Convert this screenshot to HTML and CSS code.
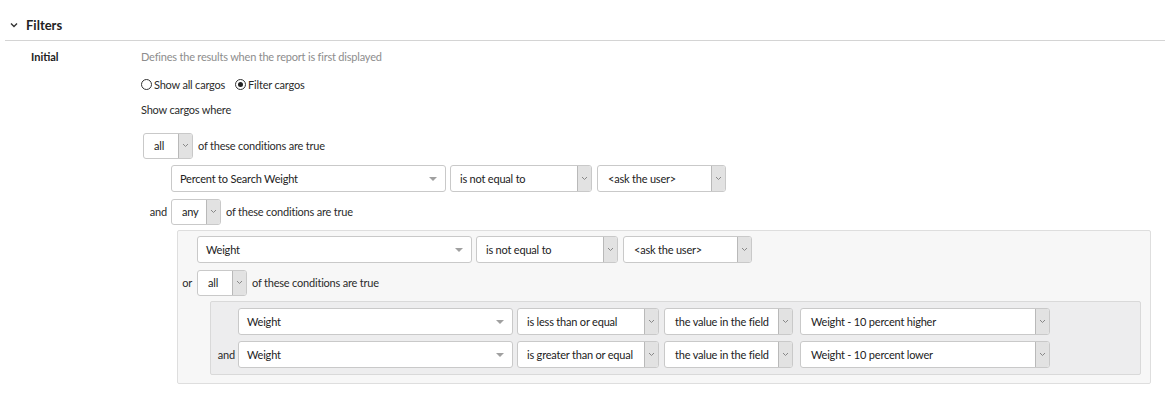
FILE: index.html
```html
<!DOCTYPE html>
<html>
<head>
<meta charset="utf-8">
<link rel="stylesheet" href="styles.css">
</head>
<body>
<div class="header">
  <svg class="hdr-chev" width="8" height="6" viewBox="0 0 8 6"><polyline points="1,1.5 4,4.5 7,1.5" fill="none" stroke="#333" stroke-width="1.4"/></svg>
  <span class="hdr-title">Filters</span>
</div>
<div class="section">
  <div class="label">Initial</div>
  <div class="content">
    <div class="desc">Defines the results when the report is first displayed</div>
    <div class="radios">
      <span class="radio"></span><span class="radio-text">Show all cargos</span>
      <span class="radio checked"></span><span class="radio-text">Filter cargos</span>
    </div>
    <div class="where">Show cargos where</div>

    <div class="group g1">
      <div class="ghead">
        <div class="sel sm"><span class="sel-text">all</span><span class="arr"><svg width="7" height="5" viewBox="0 0 7 5"><polyline points="1,1 3.5,3.5 6,1" fill="none" stroke="#888" stroke-width="1"/></svg></span></div>
        <span class="gtext">of these conditions are true</span>
      </div>
      <div class="row r1">
        <span class="conn"></span>
        <div class="combo"><span class="sel-text">Percent to Search Weight</span><span class="tri"></span></div>
        <div class="sel op"><span class="sel-text">is not equal to</span><span class="arr"><svg width="7" height="5" viewBox="0 0 7 5"><polyline points="1,1 3.5,3.5 6,1" fill="none" stroke="#888" stroke-width="1"/></svg></span></div>
        <div class="sel val"><span class="sel-text">&lt;ask the user&gt;</span><span class="arr"><svg width="7" height="5" viewBox="0 0 7 5"><polyline points="1,1 3.5,3.5 6,1" fill="none" stroke="#888" stroke-width="1"/></svg></span></div>
      </div>
      <div class="row r1 grow">
        <span class="conn">and</span>
        <div class="group g2">
          <div class="ghead">
            <div class="sel sm"><span class="sel-text">any</span><span class="arr"><svg width="7" height="5" viewBox="0 0 7 5"><polyline points="1,1 3.5,3.5 6,1" fill="none" stroke="#888" stroke-width="1"/></svg></span></div>
            <span class="gtext">of these conditions are true</span>
          </div>
          <div class="box b2">
            <div class="row r2">
              <span class="conn"></span>
              <div class="combo"><span class="sel-text">Weight</span><span class="tri"></span></div>
              <div class="sel op"><span class="sel-text">is not equal to</span><span class="arr"><svg width="7" height="5" viewBox="0 0 7 5"><polyline points="1,1 3.5,3.5 6,1" fill="none" stroke="#888" stroke-width="1"/></svg></span></div>
              <div class="sel val"><span class="sel-text">&lt;ask the user&gt;</span><span class="arr"><svg width="7" height="5" viewBox="0 0 7 5"><polyline points="1,1 3.5,3.5 6,1" fill="none" stroke="#888" stroke-width="1"/></svg></span></div>
            </div>
            <div class="row r2 grow">
              <span class="conn">or</span>
              <div class="group g3">
                <div class="ghead">
                  <div class="sel sm"><span class="sel-text">all</span><span class="arr"><svg width="7" height="5" viewBox="0 0 7 5"><polyline points="1,1 3.5,3.5 6,1" fill="none" stroke="#888" stroke-width="1"/></svg></span></div>
                  <span class="gtext">of these conditions are true</span>
                </div>
                <div class="box b3">
                  <div class="row r3">
                    <span class="conn"></span>
                    <div class="combo"><span class="sel-text">Weight</span><span class="tri"></span></div>
                    <div class="sel op"><span class="sel-text">is less than or equal</span><span class="arr"><svg width="7" height="5" viewBox="0 0 7 5"><polyline points="1,1 3.5,3.5 6,1" fill="none" stroke="#888" stroke-width="1"/></svg></span></div>
                    <div class="sel val"><span class="sel-text">the value in the field</span><span class="arr"><svg width="7" height="5" viewBox="0 0 7 5"><polyline points="1,1 3.5,3.5 6,1" fill="none" stroke="#888" stroke-width="1"/></svg></span></div>
                    <div class="sel fld"><span class="sel-text">Weight - 10 percent higher</span><span class="arr"><svg width="7" height="5" viewBox="0 0 7 5"><polyline points="1,1 3.5,3.5 6,1" fill="none" stroke="#888" stroke-width="1"/></svg></span></div>
                  </div>
                  <div class="row r3">
                    <span class="conn">and</span>
                    <div class="combo"><span class="sel-text">Weight</span><span class="tri"></span></div>
                    <div class="sel op"><span class="sel-text">is greater than or equal</span><span class="arr"><svg width="7" height="5" viewBox="0 0 7 5"><polyline points="1,1 3.5,3.5 6,1" fill="none" stroke="#888" stroke-width="1"/></svg></span></div>
                    <div class="sel val"><span class="sel-text">the value in the field</span><span class="arr"><svg width="7" height="5" viewBox="0 0 7 5"><polyline points="1,1 3.5,3.5 6,1" fill="none" stroke="#888" stroke-width="1"/></svg></span></div>
                    <div class="sel fld"><span class="sel-text">Weight - 10 percent lower</span><span class="arr"><svg width="7" height="5" viewBox="0 0 7 5"><polyline points="1,1 3.5,3.5 6,1" fill="none" stroke="#888" stroke-width="1"/></svg></span></div>
                  </div>
                </div>
              </div>
            </div>
          </div>
        </div>
      </div>
    </div>
  </div>
</div>
</body>
</html>
```
FILE: styles.css
```css
* { box-sizing: border-box; }
body {
  margin: 0;
  font-family: Lato, "Noto Sans", sans-serif;
  font-size: 11px;
  letter-spacing: -0.2px;
  color: #2b2b2b;
  background: #fff;
}
.header {
  display: flex;
  align-items: center;
  height: 41px;
  padding-top: 10px;
  margin-left: 5px;
  border-bottom: 1px solid #d4d4d4;
}
.hdr-chev { margin-left: 5px; margin-right: 8px; }
.hdr-title { font-weight: 700; font-size: 13px; color: #222; letter-spacing: 0; }

.section { display: flex; padding-top: 8px; }
.label {
  width: 141px;
  padding-left: 31px;
  font-weight: 700;
  line-height: 16px;
  color: #222;
  letter-spacing: 0;
}
.content { flex: 1; min-width: 0; padding-right: 14px; }
.desc { line-height: 16px; color: #8d8d8d; }
.radios {
  display: flex;
  align-items: center;
  height: 16px;
  margin-top: 11px;
}
.radio {
  width: 11px;
  height: 11px;
  border: 1px solid #333;
  border-radius: 50%;
  margin-right: 2px;
  position: relative;
}
.radio.checked::after {
  content: "";
  position: absolute;
  left: 2px; top: 2px;
  width: 5px; height: 5px;
  border-radius: 50%;
  background: #222;
}
.radio-text { margin-right: 10px; }
.where { line-height: 16px; margin-top: 10px; }

.group.g1 { margin-top: 14px; margin-left: 2px; }
.ghead { display: flex; align-items: center; height: 27px; }
.gtext { margin-left: 5px; }

.row { display: flex; align-items: center; margin-top: 6px; }
.row.grow { align-items: flex-start; }
.conn {
  flex: none;
  display: flex;
  align-items: center;
  justify-content: flex-end;
  height: 27px;
  padding-right: 4px;
}
.r1 > .conn { width: 28px; }
.r2 > .conn { width: 19px; padding-right: 5px; }
.r3 > .conn { width: 27px; padding-right: 3px; }
.box > .row:first-child { margin-top: 0; }

.group.g2, .group.g3 { flex: 1; min-width: 0; }

.box {
  border: 1px solid #dedede;
  border-radius: 2px;
}
.b2 {
  margin-top: 5px;
  margin-left: 6px;
  padding: 5px 0 8px 0;
  background: #f7f7f7;
}
.b3 {
  margin-top: 5px;
  margin-left: 13px;
  margin-right: 9px;
  padding: 6px 0;
  background: #ededee;
  border-color: #d9d9d9;
}

.sel, .combo {
  flex: none;
  display: flex;
  align-items: center;
  height: 27px;
  background: #fff;
  border: 1px solid #c9c9c9;
  border-radius: 3px;
  color: #222;
  white-space: nowrap;
}
.sel-text { flex: 1; padding-left: 9px; overflow: hidden; }
.sel.sm { width: 50px; height: 26px; }
.sel.sm .sel-text { padding-left: 10px; }
.combo { width: 275px; }
.combo .sel-text { padding-left: 8px; }
.op { width: 142px; margin-left: 4px; }
.val { width: 129px; margin-left: 5px; }
.val .sel-text, .fld .sel-text { padding-left: 10px; }
.fld { width: 250px; margin-left: 7px; }
.arr {
  flex: none;
  width: 14px;
  height: 100%;
  display: flex;
  align-items: center;
  justify-content: center;
  background: #e2e2e2;
  border-left: 1px solid #b9b9b9;
  border-radius: 0 2px 2px 0;
}
.tri {
  flex: none;
  width: 0; height: 0;
  margin-right: 8px;
  border-left: 4px solid transparent;
  border-right: 4px solid transparent;
  border-top: 4px solid #a0a0a0;
}
```
